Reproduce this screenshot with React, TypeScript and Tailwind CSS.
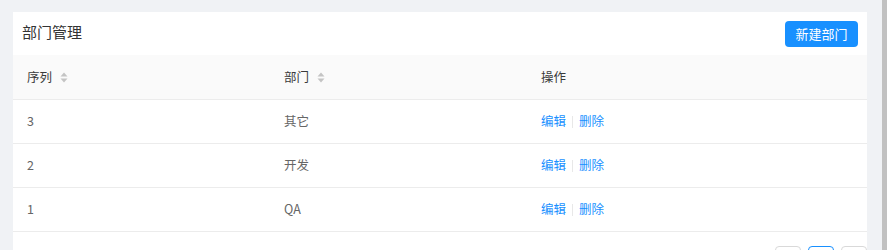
import React from "react";

const font = { fontFamily: '"Noto Sans CJK SC", "Noto Sans", sans-serif' };

function SortIcon() {
  return (
    <svg width="8" height="11" viewBox="0 0 8 11" className="ml-[8px]">
      <path d="M4 0.5 L7.5 4.5 L0.5 4.5 Z" fill="#c4c4c4" />
      <path d="M4 10.5 L7.5 6.5 L0.5 6.5 Z" fill="#c4c4c4" />
    </svg>
  );
}

const rows = [
  { id: "3", name: "其它" },
  { id: "2", name: "开发" },
  { id: "1", name: "QA" },
];

export default function App() {
  return (
    <div className="flex h-[250px] w-[887px] overflow-hidden bg-[#f0f2f5]" style={font}>
      <div className="flex-1 pl-[13px] pr-[15px] pt-[12px]">
        <div className="h-[300px] bg-white">
          <div className="flex h-[43px] items-center justify-between pl-[9px] pr-[9px]">
            <div className="pb-[2px] text-[15px] text-[#333333]">部门管理</div>
            <button className="flex h-[26px] w-[73px] items-center justify-center rounded-[4px] bg-[#1890ff] text-[13px] text-white">
              新建部门
            </button>
          </div>
          <div className="grid h-[45px] grid-cols-[257px_257px_1fr] items-center border-b border-[#ececec] bg-[#fafafa] text-[12.5px] text-[#3a3a3a]">
            <div className="flex items-center pl-[14px]">
              序列
              <SortIcon />
            </div>
            <div className="flex items-center pl-[14px]">
              部门
              <SortIcon />
            </div>
            <div className="pl-[14px]">操作</div>
          </div>
          {rows.map((r) => (
            <div
              key={r.id}
              className="grid h-[44px] grid-cols-[257px_257px_1fr] items-center border-b border-[#ececec] text-[12.5px] text-[#666666]"
            >
              <div className="pl-[14px]">{r.id}</div>
              <div className="pl-[14px]">{r.name}</div>
              <div className="flex items-center pl-[14px] text-[#1890ff]">
                <span>编辑</span>
                <span className="mx-[6px] h-[12px] w-px bg-[#e8e8e8]" />
                <span>删除</span>
              </div>
            </div>
          ))}
          <div className="flex justify-end gap-[7px] pt-[14px]">
            <div className="h-[26px] w-[26px] rounded-[4px] border border-[#d9d9d9]" />
            <div className="h-[26px] w-[26px] rounded-[4px] border border-[#1890ff]" />
            <div className="h-[26px] w-[26px] rounded-[4px] border border-[#d9d9d9]" />
          </div>
        </div>
      </div>
      <div className="w-[5px] bg-[#c1c1c1]" />
    </div>
  );
}
